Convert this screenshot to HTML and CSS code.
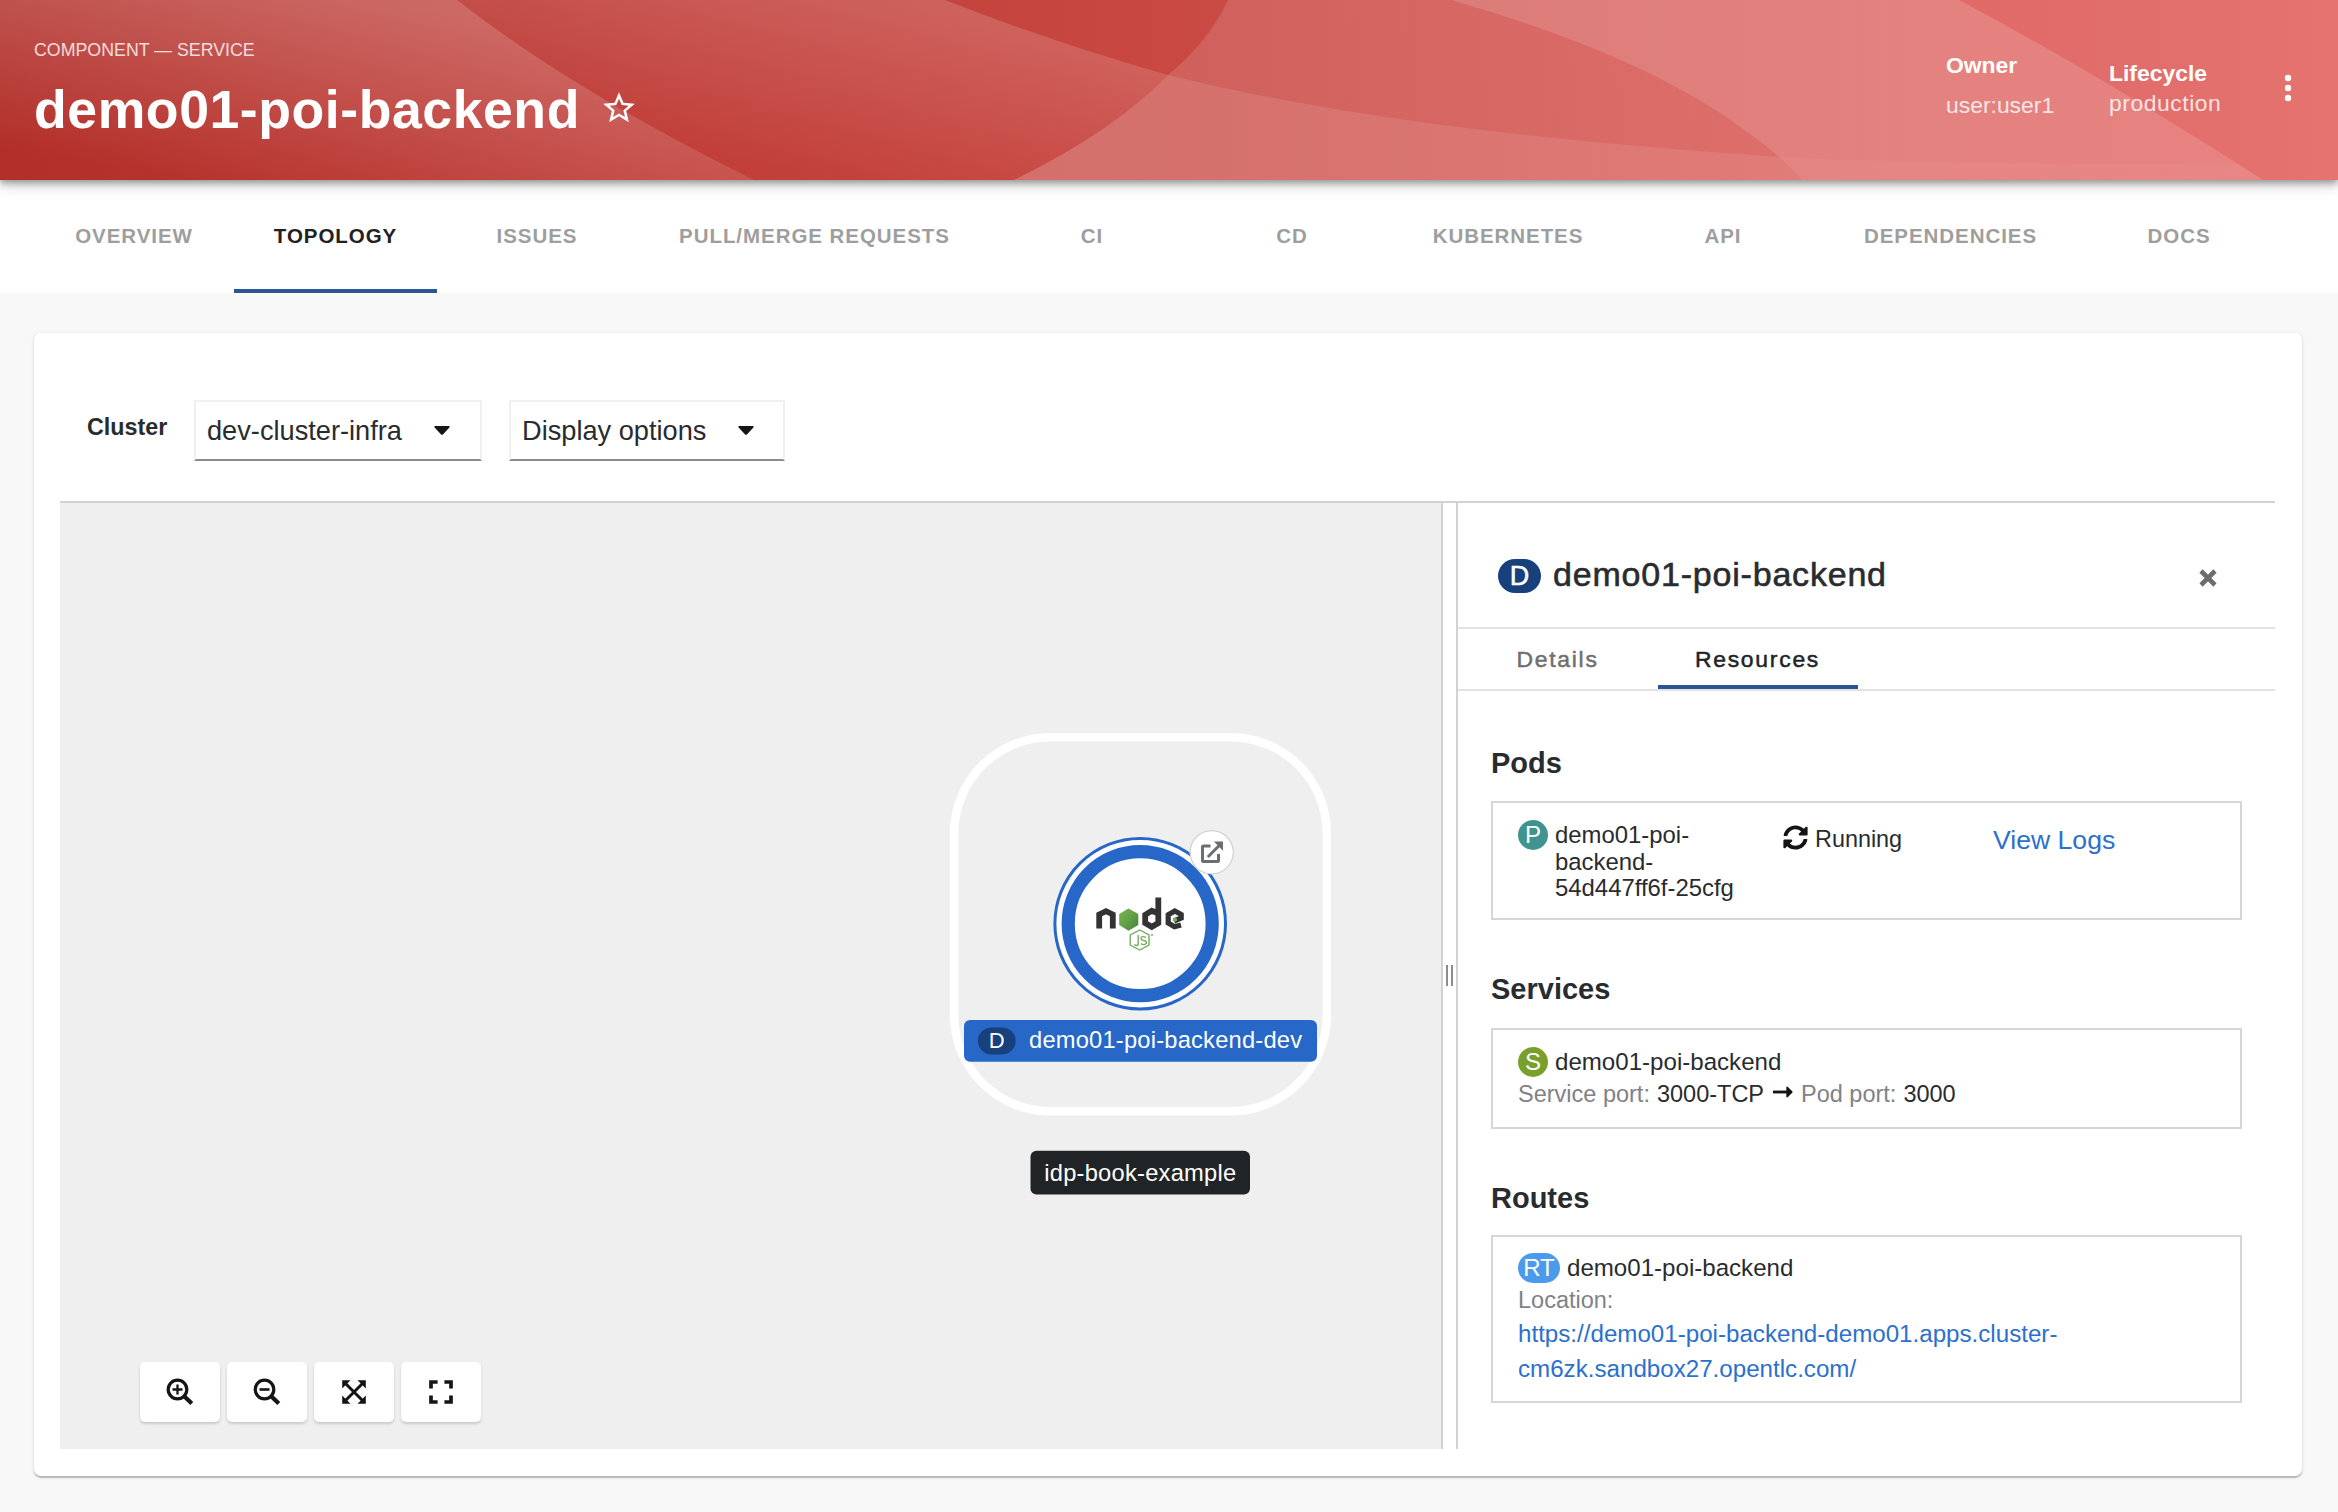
FILE: index.html
```html
<!DOCTYPE html>
<html lang="en">
<head>
<meta charset="utf-8">
<title>demo01-poi-backend</title>
<link rel="stylesheet" href="styles.css">
</head>
<body>
<header class="header">
  <svg class="header-art" viewBox="0 0 2338 180" preserveAspectRatio="none" aria-hidden="true">
    <defs>
      <linearGradient id="base" x1="0" x2="1" y1="0" y2="0"><stop offset="0" stop-color="#b12a24"/><stop offset=".27" stop-color="#c03c37"/><stop offset=".5" stop-color="#c94842"/><stop offset=".83" stop-color="#df6966"/><stop offset="1" stop-color="#e57370"/></linearGradient>
      <linearGradient id="g1" gradientUnits="userSpaceOnUse" x1="300" y1="-10" x2="270" y2="190"><stop offset="0" stop-color="#fff" stop-opacity=".25"/><stop offset="1" stop-color="#fff" stop-opacity=".02"/></linearGradient>
      <linearGradient id="g2" gradientUnits="userSpaceOnUse" x1="860" y1="0" x2="835" y2="180"><stop offset="0" stop-color="#fff" stop-opacity=".16"/><stop offset="1" stop-color="#fff" stop-opacity="0"/></linearGradient>
      <linearGradient id="g3" gradientUnits="userSpaceOnUse" x1="1200" y1="0" x2="1800" y2="120"><stop offset="0" stop-color="#fff" stop-opacity=".13"/><stop offset="1" stop-color="#fff" stop-opacity=".08"/></linearGradient>
      <linearGradient id="g5" gradientUnits="userSpaceOnUse" x1="1100" y1="0" x2="1800" y2="0"><stop offset="0" stop-color="#fff" stop-opacity=".23"/><stop offset="1" stop-color="#fff" stop-opacity=".16"/></linearGradient>
      <linearGradient id="g6" gradientUnits="userSpaceOnUse" x1="1500" y1="0" x2="2200" y2="0"><stop offset="0" stop-color="#fff" stop-opacity=".23"/><stop offset="1" stop-color="#fff" stop-opacity=".13"/></linearGradient>
    </defs>
    <rect width="2338" height="180" fill="url(#base)"/>
    <path fill="url(#g1)" d="M0 0H457Q575 92 754 180H0Z"/>
    <path fill="url(#g2)" d="M457 0H945Q1055 43 1168 75Q1114 131 1014 180H754Q575 92 457 0Z"/>
    <path fill="url(#g3)" d="M1228 0H1451C1590 40 1700 88 1779 157C1560 142 1350 120 1168 75Q1210 40 1228 0Z"/>
    <path fill="url(#g5)" d="M1168 75C1350 120 1560 142 1779 157Q1792 168 1802 180H1014Q1114 131 1168 75Z"/>
    <path fill="url(#g6)" d="M1451 0H1959Q2100 75 2263 180H1802Q1792 168 1779 157C1700 88 1590 40 1451 0Z"/>
    <path fill="#fff" fill-opacity=".04" d="M1779 157C1920 164 2040 164 2238 164L2263 180H1802Q1792 168 1779 157Z"/>
  </svg>
  <div class="heading">
    <div class="kind">COMPONENT — SERVICE</div>
    <div class="title-row">
      <h1 class="title">demo01-poi-backend</h1>
      <svg class="star" viewBox="0 0 24 24" fill="#fff"><path d="M22 9.24l-7.19-.62L12 2 9.19 8.63 2 9.24l5.46 4.73L5.82 21 12 17.27 18.18 21l-1.63-7.03L22 9.24zM12 15.4l-3.76 2.27 1-4.28-3.32-2.88 4.38-.38L12 6.1l1.71 4.04 4.38.38-3.32 2.88 1 4.28L12 15.4z"/></svg>
    </div>
  </div>
  <dl class="meta owner"><dt>Owner</dt><dd>user:user1</dd></dl>
  <dl class="meta lifecycle"><dt>Lifecycle</dt><dd>production</dd></dl>
  <svg class="more" viewBox="0 0 8 28" fill="#fff"><circle cx="4" cy="4" r="3.2"/><circle cx="4" cy="14" r="3.2"/><circle cx="4" cy="24" r="3.2"/></svg>
</header>
<nav class="tabs">
  <a class="tab">OVERVIEW</a>
  <a class="tab tab-active">TOPOLOGY</a>
  <a class="tab">ISSUES</a>
  <a class="tab tab-pull">PULL/MERGE REQUESTS</a>
  <a class="tab">CI</a>
  <a class="tab">CD</a>
  <a class="tab tab-kube">KUBERNETES</a>
  <a class="tab tab-api">API</a>
  <a class="tab tab-deps">DEPENDENCIES</a>
  <a class="tab">DOCS</a>
</nav>
<main class="card">
  <div class="toolbar">
    <span class="toolbar-label">Cluster</span>
    <div class="select select-cluster"><span>dev-cluster-infra</span><svg class="caret" viewBox="0 0 16 9"><path d="M1 0H15Q16.300 .6 15.400 1.500L8.900 8.400Q8 9.200 7.100 8.400L.6 1.500Q-.3 .6 1 0Z"/></svg></div>
    <div class="select select-display"><span>Display options</span><svg class="caret" viewBox="0 0 16 9"><path d="M1 0H15Q16.300 .6 15.400 1.500L8.900 8.400Q8 9.200 7.100 8.400L.6 1.500Q-.3 .6 1 0Z"/></svg></div>
  </div>
  <div class="split">
    <section class="canvas">
      <svg class="graph" viewBox="60 503 1381 946">
        <defs>
          <linearGradient id="leaf" x1="0" y1="0" x2="1" y2="1"><stop offset="0" stop-color="#78b450"/><stop offset=".5" stop-color="#62a146"/><stop offset="1" stop-color="#488040"/></linearGradient>
        </defs>
        <rect x="954.200" y="737.200" width="372.600" height="374" rx="96" fill="none" stroke="#fff" stroke-width="8.500"/>
        <circle cx="1140.200" cy="923.700" r="85.300" fill="#fff" stroke="#2667c8" stroke-width="3"/>
        <circle cx="1140.200" cy="923.700" r="72" fill="#fff" stroke="#2667c8" stroke-width="13.200"/>
        <g fill="none" stroke="#333" stroke-width="5.800">
          <path d="M1099.200 928.500V914.500L1106 911.200L1112.800 914.500V928.500"/>
          <path d="M1158.500 913.500L1151.800 910.800L1145.200 914.800V923L1151.800 926.800L1158.300 923V897.500"/>
          <path d="M1181 925L1174.500 926.800L1168.200 923V914.800L1174.800 911L1181.200 914.500V918L1174 921" stroke-width="5.200"/>
        </g>
        <path fill="url(#leaf)" d="M1128.500 908.500L1138.300 914V925L1128.500 930.800L1119.200 925V914Z"/>
        <path fill="#6cae5e" d="M1175 917.500l2 1.100v2.200l-2 1.100-2-1.100v-2.200Z"/>
        <path d="M1139.800 930L1149 935V945L1139.800 950L1130.200 945V935Z" fill="none" stroke="#76ac64" stroke-width="1.400"/>
        <path d="M1138.200 935V944.500Q1136.800 946.500 1134.500 944.500M1146 937.500Q1141 935.500 1141 938.200Q1141.200 940.300 1144 940.500Q1147 941 1146.300 943.500Q1143.500 945.700 1140.800 943.500" fill="none" stroke="#76ac64" stroke-width="1.400"/>
        <circle cx="1152" cy="935" r="1" fill="#76ac64"/>
        <circle cx="1211.700" cy="852.300" r="21.600" fill="#fff" stroke="#d2d2d2" stroke-width="1.200"/>
        <g fill="none" stroke="#6a6e73" stroke-width="3">
          <path d="M1210.500 846H1203.500Q1202.500 846 1202.500 847V860.500Q1202.500 861.500 1203.500 861.500H1217.500Q1218.500 861.500 1218.500 860.500V854"/>
          <path d="M1207.800 857L1219.500 845.200"/>
        </g>
        <path fill="#6a6e73" d="M1213.800 841.600H1223V850.800Z"/>
        <rect x="964" y="1020" width="353" height="41.700" rx="6" fill="#2667c8"/>
        <rect x="978" y="1027.400" width="37.600" height="27" rx="13.500" fill="#17407c"/>
        <text class="node-kind" x="996.800" y="1048.200" text-anchor="middle">D</text>
        <text class="node-label" x="1029" y="1048.200" textLength="273">demo01-poi-backend-dev</text>
        <rect x="1030.500" y="1150.700" width="219.500" height="43.800" rx="6" fill="#212427"/>
        <text class="node-label" x="1140.200" y="1180.500" text-anchor="middle" textLength="192">idp-book-example</text>
      </svg>
      <div class="controls">
        <button class="control"><svg viewBox="0 0 28 28" class="icon"><circle cx="11.500" cy="11.500" r="9.300" fill="none" stroke="#151515" stroke-width="3.200"/><path d="M18.200 18.200L25.800 25.600" stroke="#151515" stroke-width="4.200"/><path d="M6.500 11.500H16.500M11.500 6.500V16.500" stroke="#151515" stroke-width="2.300"/></svg></button>
        <button class="control"><svg viewBox="0 0 28 28" class="icon"><circle cx="11.500" cy="11.500" r="9.300" fill="none" stroke="#151515" stroke-width="3.200"/><path d="M18.200 18.200L25.800 25.600" stroke="#151515" stroke-width="4.200"/><path d="M6.500 11.500H16.500" stroke="#151515" stroke-width="2.600"/></svg></button>
        <button class="control"><svg viewBox="0 0 28 28" class="icon"><path d="M5 5L23 23M23 5L5 23" stroke="#151515" stroke-width="3"/><path fill="#151515" d="M2.200 2.200H10.500L2.200 10.500ZM25.800 2.200V10.500L17.500 2.200ZM2.200 25.800V17.500L10.500 25.800ZM25.800 25.800H17.500L25.800 17.500Z"/></svg></button>
        <button class="control"><svg viewBox="0 0 28 28" class="icon"><path d="M10.600 4H4V10.600M17.400 4H24V10.600M10.600 24H4V17.400M17.400 24H24V17.400" fill="none" stroke="#151515" stroke-width="3.700"/></svg></button>
      </div>
    </section>
    <div class="splitter"><span class="grip"></span></div>
    <aside class="panel">
      <div class="panel-head">
        <span class="badge badge-deployment">D</span>
        <h2 class="panel-title">demo01-poi-backend</h2>
        <svg class="close" viewBox="0 0 18 18"><path d="M2 2L16 16M16 2L2 16" stroke="#6a6e73" stroke-width="4.600"/></svg>
      </div>
      <div class="panel-tabs"><a class="panel-tab">Details</a><a class="panel-tab panel-tab-active">Resources</a></div>
      <div class="panel-body">
        <h3 class="section">Pods</h3>
        <div class="box pods">
          <span class="badge badge-pod">P</span>
          <span class="pod-name">demo01-poi-<br>backend-<br>54d447ff6f-25cfg</span>
          <span class="pod-status"><svg class="sync" viewBox="0 0 512 512"><path fill="#151515" d="M370.720 133.280C339.458 104.008 298.888 87.962 255.848 88c-77.458.068-144.328 53.178-162.791 126.850-1.344 5.363-6.122 9.150-11.651 9.150H24.103c-7.498 0-13.194-6.807-11.807-14.176C33.933 94.924 134.813 8 256 8c66.448 0 126.791 26.136 171.315 68.685L463.030 40.970C478.149 25.851 504 36.559 504 57.941V192c0 13.255-10.745 24-24 24H345.941c-21.382 0-32.090-25.851-16.971-40.971l41.750-41.749zM32 296h134.059c21.382 0 32.090 25.851 16.971 40.971l-41.750 41.750c31.262 29.273 71.835 45.319 114.876 45.280 77.418-.07 144.315-53.144 162.787-126.849 1.344-5.363 6.122-9.150 11.651-9.150h57.304c7.498 0 13.194 6.807 11.807 14.176C478.067 417.076 377.187 504 256 504c-66.448 0-126.791-26.136-171.315-68.685L48.970 471.030C33.851 486.149 8 475.441 8 454.059V320c0-13.255 10.745-24 24-24z"/></svg>Running</span>
          <a class="logs">View Logs</a>
        </div>
        <h3 class="section">Services</h3>
        <div class="box services">
          <div class="line"><span class="badge badge-service">S</span>demo01-poi-backend</div>
          <div class="line detail"><span class="muted">Service port:</span><span class="port">3000-TCP</span><svg class="arrow" viewBox="0 0 22 12"><path d="M1 6H16" stroke="#151515" stroke-width="3"/><path d="M15 .8Q15.500 0 16.400 .6L21.200 5.300Q21.900 6 21.200 6.700L16.400 11.400Q15.500 12 15 11.200Z" fill="#151515"/></svg><span class="muted">Pod port:</span><span class="port">3000</span></div>
        </div>
        <h3 class="section">Routes</h3>
        <div class="box routes">
          <div class="line"><span class="badge badge-route">RT</span>demo01-poi-backend</div>
          <div class="line detail muted">Location:</div>
          <a class="url">https://demo01-poi-backend-demo01.apps.cluster-<br>cm6zk.sandbox27.opentlc.com/</a>
        </div>
      </div>
    </aside>
  </div>
</main>
</body>
</html>
```
FILE: styles.css
```css
* { box-sizing: border-box; }
body {
  margin: 0;
  width: 2338px;
  height: 1512px;
  overflow: hidden;
  background: #f8f8f8;
  color: #292c2f;
  font-family: "Liberation Sans", Arial, sans-serif;
  font-size: 24.100px;
  white-space: nowrap;
}
h1, h2, h3, dl, dd { margin: 0; }

/* Page header */
.header {
  position: relative;
  z-index: 1;
  display: flex;
  height: 180px;
  padding-left: 34px;
  color: #fff;
  box-shadow: 0 3px 7px rgba(0, 0, 0, .36), 0 7px 14px rgba(0, 0, 0, .12);
}
.header-art { position: absolute; inset: 0; width: 100%; height: 100%; z-index: -1; }
.heading { width: 1912px; padding-top: 38px; }
.kind { font-size: 17.800px; line-height: 24px; opacity: .8; }
.title-row { display: flex; align-items: flex-start; margin-top: 17px; gap: 20px; }
.title { font-size: 53.600px; line-height: 60px; letter-spacing: .55px; }
.star { width: 38px; height: 38px; margin-top: 10px; }
.meta { font-size: 22.900px; line-height: 30px; }
.meta dt { font-weight: bold; }
.meta dd { opacity: .8; }
.owner { width: 163px; padding-top: 50px; }
.owner dd { margin-top: 10px; }
.lifecycle { width: 175px; padding-top: 58px; }
.lifecycle dd { letter-spacing: .55px; }
.more { width: 8px; height: 28px; margin-top: 74px; }

/* Entity tabs */
.tabs {
  display: flex;
  height: 113px;
  padding-left: 34px;
  background: #fff;
}
.tab {
  width: 200px;
  padding-top: 41px;
  font-size: 20.500px;
  font-weight: bold;
  letter-spacing: .95px;
  line-height: 30px;
  text-align: center;
  color: #9e9e9e;
}
.tab-active { width: 203px; color: #212121; border-bottom: 4px solid #2d5593; }
.tab-pull { width: 355px; }
.tab-kube { width: 232px; }
.tab-api { width: 198px; }
.tab-deps { width: 257px; }

/* Card */
.card {
  width: 2268px;
  height: 1143px;
  margin: 40px 0 0 34px;
  padding: 67px 27px 27px 26px;
  background: #fff;
  border-radius: 7px;
  box-shadow: 0 2px 1px rgba(0, 0, 0, .2), 0 1px 4px rgba(0, 0, 0, .12);
}
.toolbar { display: flex; height: 101px; padding-left: 27px; }
.toolbar-label { width: 107px; padding-top: 12px; font-size: 23.300px; line-height: 30px; font-weight: bold; }
.select {
  display: flex;
  align-items: center;
  justify-content: space-between;
  height: 61px;
  padding-left: 11px;
  border: 2px solid #f0f0f0;
  border-bottom-color: #8a8d90;
  font-size: 27.200px;
  line-height: 36px;
}
.select-cluster { width: 288px; margin-right: 27px; padding-right: 30px; }
.select-display { width: 276px; padding-right: 29px; }
.caret { width: 16px; height: 9px; fill: #151515; }

/* Topology canvas and resizable side panel */
.split { display: flex; height: 948px; border-top: 2px solid #d2d2d2; }
.canvas { position: relative; width: 1381px; background: #efefef; }
.graph { display: block; width: 1381px; height: 946px; }
.node-label, .node-kind { font-size: 23.700px; fill: #fff; }
.node-kind { font-size: 22px; }
.controls { position: absolute; left: 80px; bottom: 27px; display: flex; gap: 7px; }
.control {
  display: flex;
  align-items: center;
  justify-content: center;
  width: 80px;
  height: 60px;
  padding: 0;
  border: 0;
  border-radius: 5px;
  background: #fff;
  box-shadow: 0 2px 3px rgba(0, 0, 0, .16);
}
.icon { width: 28px; height: 28px; }
.splitter {
  display: flex;
  align-items: center;
  justify-content: center;
  width: 17px;
  border: solid #d2d2d2;
  border-width: 0 2px;
}
.grip { width: 7px; height: 21px; margin-bottom: 2px; border: solid #8a8d90; border-width: 0 2px; }
.panel { flex: 1; }
.panel-head { display: flex; height: 126px; padding-left: 40px; border-bottom: 2px solid #e3e3e3; }
.badge {
  display: flex;
  align-items: center;
  justify-content: center;
  flex: none;
  width: 30px;
  height: 30px;
  margin-right: 7px;
  border-radius: 15px;
  color: #fff;
}
.badge-deployment { width: 43px; height: 34px; margin: 56px 12px 0 0; border-radius: 17px; background: #17407c; font-size: 27px; -webkit-text-stroke: .5px; }
.panel-title { width: 646px; padding-top: 49px; font-size: 34px; line-height: 44px; font-weight: normal; letter-spacing: .8px; -webkit-text-stroke: .6px; }
.close { width: 18px; height: 18px; margin-top: 66px; }
.panel-tabs { display: flex; height: 62px; border-bottom: 2px solid #e3e3e3; }
.panel-tab { width: 200px; padding-top: 14px; padding-right: 1px; font-size: 22.900px; line-height: 32px; letter-spacing: 1.750px; text-align: center; color: #6f6f6f; -webkit-text-stroke: .5px; }
.panel-tab-active { color: #212427; border-bottom: 4px solid #2d5593; }
.panel-body { padding: 51px 33px 0; }
.section { font-size: 29px; line-height: 42px; }
.box { border: 2px solid #d6d6d6; padding: 17px 25px 0; }
.pods { display: flex; height: 119px; margin: 17px 0 48px; }
.badge-pod { background: #3f9490; }
.pod-name { width: 228px; padding-top: 2px; line-height: 26.700px; font-size: 23.900px; }
.pod-status { display: flex; width: 210px; gap: 7px; padding-top: 4px; line-height: 30px; font-size: 23.400px; }
.sync { width: 25px; height: 25px; margin-top: 1px; }
.logs { padding-top: 5px; font-size: 26.600px; line-height: 30px; color: #2b70cc; }
.services { height: 101px; margin: 18px 0 48px; padding-top: 16px; }
.line { display: flex; align-items: center; height: 32px; line-height: 32px; }
.detail { font-size: 23.500px; }
.badge-service { background: #7aa02c; }
.muted { color: #7f8286; }
.port { margin-left: 7px; }
.arrow { width: 21px; height: 12px; margin: 0 8px 4px; }
.routes { height: 168px; margin-top: 16px; padding-top: 15px; }
.badge-route { width: 42px; background: #4b9aec; }
.url { line-height: 35px; color: #2b70cc; font-size: 24.150px; }
```
